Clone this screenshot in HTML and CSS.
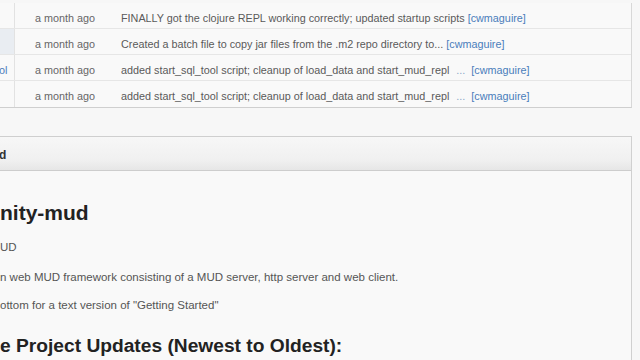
FILE: index.html
```html
<!DOCTYPE html>
<html>
<head>
<meta charset="utf-8">
<link rel="stylesheet" href="styles.css">
</head>
<body>
<div class="page">
  <div class="commits">
    <div class="row">
      <div class="c-name"></div>
      <div class="c-age">a month ago</div>
      <div class="c-msg">FINALLY got the clojure REPL working correctly; updated startup scripts <a class="author">[cwmaguire]</a></div>
    </div>
    <div class="row">
      <div class="c-name sel"></div>
      <div class="c-age">a month ago</div>
      <div class="c-msg">Created a batch file to copy jar files from the .m2 repo directory to... <a class="author">[cwmaguire]</a></div>
    </div>
    <div class="row">
      <div class="c-name"><a class="file">ol</a></div>
      <div class="c-age">a month ago</div>
      <div class="c-msg">added start_sql_tool script; cleanup of load_data and start_mud_repl <span class="ell">...</span> <a class="author">[cwmaguire]</a></div>
    </div>
    <div class="row last">
      <div class="c-name"></div>
      <div class="c-age">a month ago</div>
      <div class="c-msg">added start_sql_tool script; cleanup of load_data and start_mud_repl <span class="ell">...</span> <a class="author">[cwmaguire]</a></div>
    </div>
  </div>

  <div class="readme">
    <div class="readme-head"><span class="fname">d</span></div>
    <div class="readme-body">
      <h1>nity-mud</h1>
      <p class="sub">UD</p>
      <p class="p1">n web MUD framework consisting of a MUD server, http server and web client.</p>
      <p class="p2">ottom for a text version of "Getting Started"</p>
      <h2>e Project Updates (Newest to Oldest):</h2>
    </div>
  </div>
</div>
</body>
</html>
```
FILE: styles.css
```css
html, body {
  margin: 0;
  padding: 0;
  background: #f7f7f7;
  overflow: hidden;
}
.page {
  width: 632px;
  padding-top: 3px;
  font-family: "Liberation Sans", Arial, sans-serif;
}
.commits {
  border-right: 1px solid #d8d8d8;
  border-bottom: 1px solid #cfcfcf;
  background: #f9f9f9;
}
.row {
  display: flex;
  height: 25px;
  border-bottom: 1px solid #e6e6e6;
  align-items: center;
  font-size: 10.8px;
  color: #555;
}
.row.last { border-bottom: none; height: 26px; }
.c-name {
  width: 15px;
  height: 100%;
  border-right: 1px solid #e2e2e2;
  display: flex;
  align-items: center;
  padding-top: 4px;
  box-sizing: border-box;
}
.c-name.sel { background: #e9edf2; }
.file { color: #4a7dbb; margin-left: -1px; }
.c-age {
  width: 86px;
  padding-left: 20px;
  padding-top: 4px;
  color: #666;
}
.c-msg {
  padding-top: 4px;
  color: #5a5a5a;
  white-space: nowrap;
}
.author { color: #4a7dbb; }
.ell { color: #8aa6c8; padding: 0 3px 0 4px; }

.readme {
  margin-top: 28px;
  border-right: 1px solid #d0d0d0;
  height: 240px;
  background: #f9f9f9;
}
.readme-head {
  height: 33px;
  border-top: 1px solid #cfcfcf;
  border-bottom: 1px solid #cdcdcd;
  background: linear-gradient(#f7f7f7, #f0f0f0 70%, #e6e6e6);
  display: flex;
  align-items: center;
}
.fname {
  font-size: 12px;
  font-weight: bold;
  color: #333;
  margin-left: -1px;
  padding-top: 2px;
}
.readme-body {
  padding-top: 29px;
  color: #444;
}
h1 {
  margin: 0;
  font-size: 21px;
  font-weight: bold;
  color: #222;
  line-height: 26px;
}
p {
  margin: 0;
  font-size: 11.5px;
  line-height: 16px;
  color: #555;
}
p.sub { margin-top: 13px; }
p.p1 { margin-top: 14px; }
p.p2 { margin-top: 12px; }
h2 {
  margin: 21px 0 0;
  font-size: 19.2px;
  line-height: 24px;
  font-weight: bold;
  color: #222;
}
```
